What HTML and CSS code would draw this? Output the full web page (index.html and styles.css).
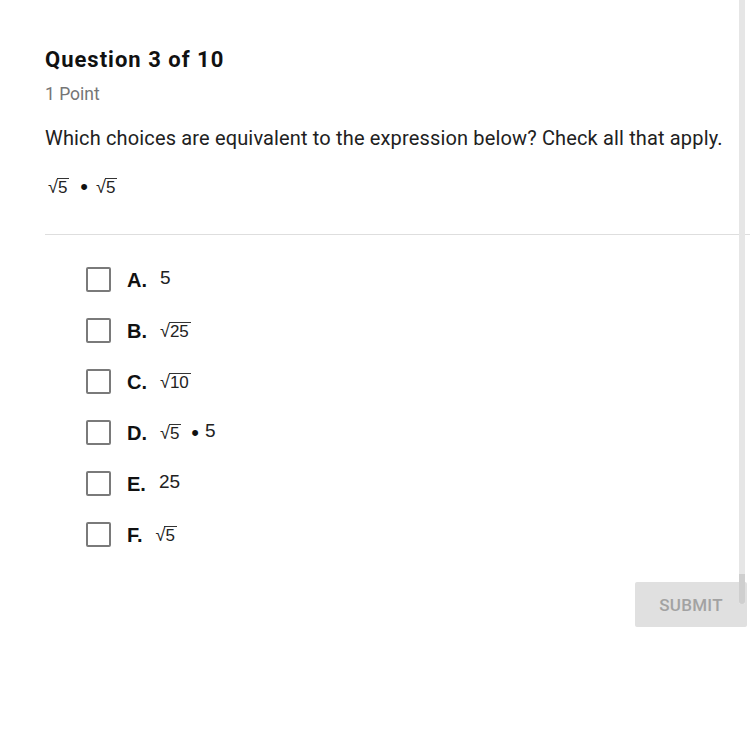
FILE: index.html
```html
<!DOCTYPE html>
<html>
<head>
<meta charset="utf-8">
<link rel="stylesheet" href="styles.css">
</head>
<body>
<div class="page">
  <div class="scrollbar"><div class="thumb"></div></div>
  <div class="content">
    <h1 class="title">Question 3 of 10</h1>
    <div class="points">1 Point</div>
    <p class="prompt">Which choices are equivalent to the expression below? Check all that apply.</p>
    <div class="expr"><span class="sqrt"><span class="rad">√</span><span class="under">5</span></span><span class="dot">•</span><span class="sqrt"><span class="rad">√</span><span class="under">5</span></span></div>
    <hr class="divider">
    <ul class="choices">
      <li class="choice"><span class="box"></span><span class="letter">A.</span><span class="val num">5</span></li>
      <li class="choice"><span class="box"></span><span class="letter">B.</span><span class="val"><span class="sqrt"><span class="rad">√</span><span class="under">25</span></span></span></li>
      <li class="choice"><span class="box"></span><span class="letter">C.</span><span class="val"><span class="sqrt"><span class="rad">√</span><span class="under">10</span></span></span></li>
      <li class="choice"><span class="box"></span><span class="letter">D.</span><span class="val"><span class="sqrt"><span class="rad">√</span><span class="under">5</span></span><span class="dot small">•</span><span class="num">5</span></span></li>
      <li class="choice"><span class="box"></span><span class="letter">E.</span><span class="val num">25</span></li>
      <li class="choice"><span class="box"></span><span class="letter">F.</span><span class="val"><span class="sqrt"><span class="rad">√</span><span class="under">5</span></span></span></li>
    </ul>
    <div class="actions"><button class="submit">SUBMIT</button></div>
  </div>
</div>
</body>
</html>
```
FILE: styles.css
```css
html, body {
  margin: 0;
  padding: 0;
  background: #fff;
}
body {
  font-family: Roboto, "Liberation Sans", sans-serif;
  color: #212121;
}
.page {
  position: relative;
  width: 750px;
  height: 750px;
}
.scrollbar {
  position: absolute;
  left: 739px;
  top: 0;
  width: 6px;
  height: 604px;
  background: #e6e6e6;
}
.thumb {
  position: absolute;
  left: 0;
  bottom: 0;
  width: 6px;
  height: 30px;
  background: #cfcfcf;
  border-radius: 0 0 3px 3px;
}
.content {
  padding: 47px 0 0 45px;
}
.title {
  margin: 0;
  font-size: 22px;
  line-height: 26px;
  font-weight: 700;
  letter-spacing: 1px;
  color: #111;
}
.points {
  margin-top: 11px;
  font-size: 17.5px;
  line-height: 20px;
  color: #757575;
}
.prompt {
  margin: 22px 0 0;
  font-size: 20px;
  line-height: 24px;
  letter-spacing: 0.15px;
  color: #212121;
  white-space: nowrap;
}
.expr {
  margin-top: 25px;
  height: 24px;
  display: flex;
  align-items: center;
  padding-left: 3px;
  color: #222;
}
.sqrt {
  display: inline-flex;
  align-items: flex-end;
  font-family: "Liberation Sans", Arial, sans-serif;
  font-size: 17px;
  line-height: 19px;
  color: #222;
}
.rad {
  font-size: 18px;
  line-height: 20px;
}
.under {
  border-top: 1px solid #333;
  line-height: 18px;
  padding: 0 2px 0 1px;
  margin-left: -1px;
}
.dot {
  font-family: "Liberation Sans", Arial, sans-serif;
  margin: 0 8px 0 11px;
  font-size: 22px;
  line-height: 20px;
  color: #111;
}
.dot.small {
  margin: 0 6px 0 10px;
}
.divider {
  margin: 35px 0 0;
  border: 0;
  border-top: 1px solid #dedede;
}
.choices {
  list-style: none;
  margin: 19px 0 0;
  padding: 0 0 0 41px;
}
.choice {
  display: flex;
  align-items: center;
  height: 51px;
}
.box {
  width: 21px;
  height: 21px;
  border: 2px solid #7a7a7a;
  border-radius: 2px;
  flex: none;
}
.letter {
  margin-left: 16px;
  margin-right: 13px;
  font-family: "Liberation Sans", Arial, sans-serif;
  font-weight: 700;
  font-size: 20px;
  color: #111;
  position: relative;
  top: 1px;
}
.val {
  display: inline-flex;
  align-items: center;
  color: #222;
}
.num {
  font-family: "Liberation Sans", Arial, sans-serif;
  font-size: 19px;
  position: relative;
  top: -2px;
}
.actions {
  display: flex;
  justify-content: flex-end;
  margin-top: 22px;
  padding-right: 3px;
}
.submit {
  width: 112px;
  height: 45px;
  border: 0;
  border-radius: 2px;
  background: #e0e0e0;
  color: #a2a2a2;
  font-family: Roboto, sans-serif;
  font-size: 17px;
  font-weight: 500;
  letter-spacing: 0.3px;
}
```
